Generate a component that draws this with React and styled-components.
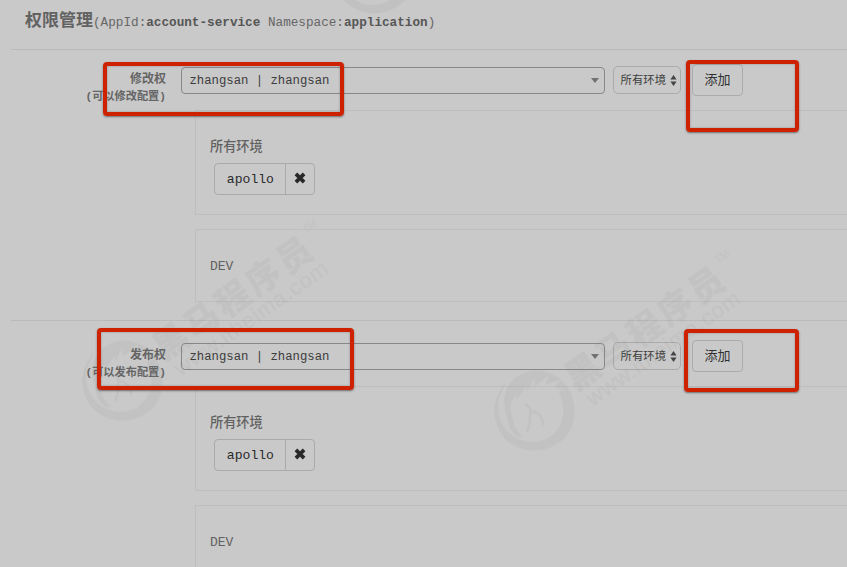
import React from "react";
import styled, { createGlobalStyle } from "styled-components";

const Global = createGlobalStyle`
  * { box-sizing: border-box; }
  html, body { margin: 0; height: 100%; overflow: hidden; background: #c9c9c9; }
`;

const mono = `"Liberation Mono", "Noto Sans CJK SC", monospace`;

const Page = styled.main`
  position: relative;
  width: 847px;
  height: 567px;
  overflow: hidden;
  background: #c9c9c9;
  color: #636363;
  font-family: ${mono};
  padding-left: 11px;
`;

const Header = styled.header`
  display: flex;
  align-items: baseline;
  height: 50px;
  padding: 7px 0 0 14px;
  border-bottom: 1px solid #bababa;
  white-space: pre;
`;

const Title = styled.h1`
  margin: 0;
  font: 700 17px/24px "Noto Sans CJK SC", sans-serif;
  color: #626262;
`;

const Meta = styled.span`
  font-size: 12.68px;
  line-height: 24px;
  color: #666;
  b { color: #565656; }
`;

const Section = styled.section`
  height: ${(p) => p.$height}px;
  padding-top: ${(p) => p.$top}px;
  border-bottom: 1px solid #bababa;
`;

const FormRow = styled.div`
  display: flex;
  align-items: flex-start;
  height: 46px;
`;

const Label = styled.div`
  width: 155px;
  margin-right: 14.5px;
  padding-top: 5px;
  text-align: right;
  font: 700 12px/18px "Noto Sans CJK SC", sans-serif;
  color: #656565;
`;

const Hint = styled.div`
  font-size: 11.2px;
  line-height: 17px;
  white-space: nowrap;
  span { font-family: "Liberation Mono", monospace; }
`;

const UserSelect = styled.div`
  display: flex;
  align-items: center;
  justify-content: space-between;
  width: 424px;
  height: 27px;
  margin: 3px 8px 0 0;
  padding: 1px 5px 0 8px;
  border: 1px solid #888;
  border-radius: 4px;
  font-size: 12.28px;
  color: #3c3c3c;
  white-space: pre;
`;

const Caret = styled.i`
  margin-top: -2px;
  border: 4px solid transparent;
  border-top: 5px solid #717171;
  border-bottom: 0;
`;

const EnvSelect = styled.div`
  display: flex;
  align-items: center;
  justify-content: space-between;
  width: 68px;
  height: 28px;
  margin: 2px 11.5px 0 0;
  padding: 0 3px 0 7px;
  border: 1px solid #aaa;
  border-radius: 5px;
  font: 11.4px/25px "Noto Sans CJK SC", sans-serif;
  color: #3d3d3d;
  white-space: nowrap;
`;

const EnvValue = styled.span`
  margin-top: -2px;
`;

const AddButton = styled.button`
  width: 51px;
  height: 32px;
  padding: 0 0 2px;
  border: 1px solid #ababab;
  border-radius: 4px;
  background: transparent;
  font: 13px/28px "Noto Sans CJK SC", sans-serif;
  color: #303030;
`;

const Panel = styled.div`
  width: 700px;
  height: ${(p) => p.$height}px;
  margin: 0 0 ${(p) => p.$gap || 0}px 184px;
  padding: ${(p) => p.$top}px 14px 0;
  border: 1px solid #bebec0;
`;

const EnvName = styled.div`
  height: 20px;
  font-family: ${mono};
  line-height: 20px;
  font-weight: ${(p) => (p.$light ? 400 : 500)};
  font-size: ${(p) => (p.$light ? 13 : 13.2)}px;
  color: #616161;
`;

const UserTag = styled.div`
  display: flex;
  width: 101px;
  height: 32px;
  margin: 5px 0 0 4.4px;
  border: 1px solid #aaa;
  border-radius: 4px;
`;

const UserName = styled.span`
  width: 71px;
  border-right: 1px solid #aaa;
  padding-top: 1px;
  text-align: center;
  font-size: 13.1px;
  line-height: 30px;
  color: #292929;
`;

const Remove = styled.button`
  flex: 1;
  display: grid;
  place-items: center;
  padding: 0 0 2px;
  border: 0;
  background: transparent;
`;

const Highlight = styled.div`
  position: absolute;
  left: ${(p) => p.$x}px;
  top: ${(p) => p.$y}px;
  width: ${(p) => p.$w}px;
  height: ${(p) => p.$h}px;
  border: 4px solid #cd2100;
  border-radius: 4px;
  box-shadow: 0 1px 2px rgba(70, 70, 70, 0.7), inset 0 0 2px rgba(70, 70, 70, 0.5);
  pointer-events: none;
`;

const WatermarkLayer = styled.svg`
  position: absolute;
  inset: 0;
  pointer-events: none;
`;

function UpDown() {
  return (
    <svg width="7" height="11" viewBox="0 0 7 11" fill="#444">
      <path d="M3.5 0L6.6 4.6H.4zM3.5 11L.4 6.4h6.2z" />
    </svg>
  );
}

function Cross() {
  return (
    <svg width="12" height="12" viewBox="0 0 12 12">
      <path d="M1.9 1.9L10.1 10.1M10.1 1.9L1.9 10.1" stroke="#282828" strokeWidth="3.7" />
    </svg>
  );
}

// Origin is the centre of the round horse emblem.
function Watermark({ x, y, emblemOnly }) {
  return (
    <g transform={`translate(${x} ${y})`} fill="#777" opacity="0.085">
      <g transform="scale(0.3333) translate(-148 -148)">
        <path d="M68 62C20 110 15 180 60 232C110 285 200 280 245 225C285 175 275 95 225 55C180 20 120 20 78 65C60 85 55 120 62 150C70 185 75 215 100 229L118 226C98 220 90 200 84 175C80 150 74 150 80 122L98 98L95 118L128 72L127 92L150 50L150 78L196 40L182 72L228 56L210 80L243 88L222 93C245 140 240 190 205 222C160 260 95 245 62 205C30 160 35 110 68 62Z" />
        <path
          d="M122 132C140 138 138 150 137 160C133 180 140 195 125 212M139 151C165 155 172 170 177 193"
          fill="none"
          stroke="#777"
          strokeWidth="7"
        />
      </g>
      {!emblemOnly && (
        <g transform="rotate(-35)">
          <text x="45" y="9" fontFamily="Noto Sans CJK SC, sans-serif" fontWeight="900" fontSize="34" letterSpacing="3.6">
            黑马程序员
          </text>
          <text x="235" y="-14" fontFamily="Liberation Sans, sans-serif" fontSize="10">
            TM
          </text>
          <text x="50" y="31" fontFamily="Liberation Sans, sans-serif" fontSize="22" textLength="182">
            www.itheima.com
          </text>
        </g>
      )}
    </g>
  );
}

function Permission({ name, hint, top, height }) {
  return (
    <Section $top={top} $height={height}>
      <FormRow>
        <Label>
          {name}
          <Hint>
            <span>(</span>
            {hint}
            <span>)</span>
          </Hint>
        </Label>
        <UserSelect>
          zhangsan | zhangsan
          <Caret />
        </UserSelect>
        <EnvSelect>
          <EnvValue>所有环境</EnvValue>
          <UpDown />
        </EnvSelect>
        <AddButton>添加</AddButton>
      </FormRow>
      <Panel $height={105} $top={27} $gap={14}>
        <EnvName>所有环境</EnvName>
        <UserTag>
          <UserName>apollo</UserName>
          <Remove aria-label="remove">
            <Cross />
          </Remove>
        </UserTag>
      </Panel>
      <Panel $height={73} $top={27}>
        <EnvName $light>DEV</EnvName>
      </Panel>
    </Section>
  );
}

export default function App() {
  return (
    <>
      <Global />
      <Page>
        <Header>
          <Title>权限管理</Title>
          <Meta>
            (AppId:<b>account-service</b> Namespace:<b>application</b>)
          </Meta>
        </Header>
        <Permission name="修改权" hint="可以修改配置" top={14} height={271} />
        <Permission name="发布权" hint="可以发布配置" top={19} height={276} />
        <WatermarkLayer width="847" height="567" viewBox="0 0 847 567">
          <Watermark x={122} y={380} />
          <Watermark x={534} y={410} />
          <Watermark x={374} y={-27} emblemOnly />
        </WatermarkLayer>
        <Highlight $x={103} $y={62} $w={241} $h={54} />
        <Highlight $x={686} $y={60} $w={113} $h={72} />
        <Highlight $x={97} $y={328} $w={257} $h={62} />
        <Highlight $x={684} $y={329} $w={115} $h={63} />
      </Page>
    </>
  );
}
